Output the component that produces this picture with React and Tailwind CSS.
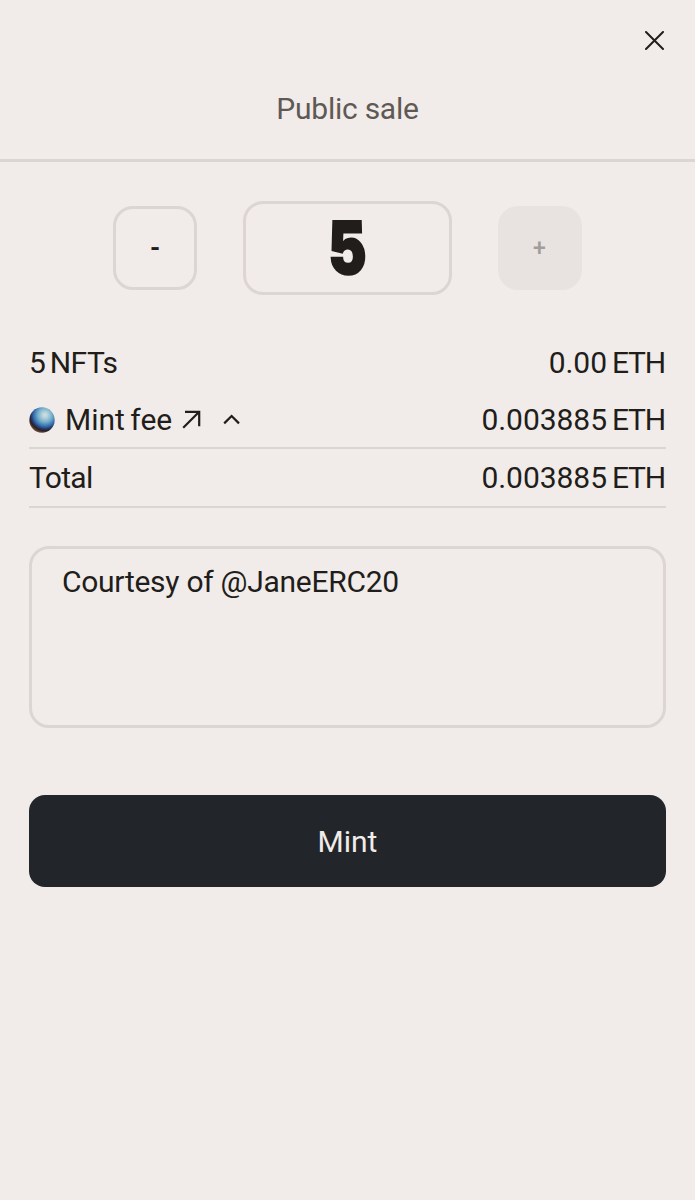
import React from "react";

function CloseIcon() {
  return (
    <svg width="20" height="20" viewBox="0 0 20 20" fill="none" stroke="#211d1a" strokeWidth="2" strokeLinecap="round">
      <path d="M1 1 18 18M18 1 1 18" />
    </svg>
  );
}

function Orb() {
  return (
    <svg width="26" height="26" viewBox="0 0 26 26">
      <defs>
        <radialGradient id="orb" gradientUnits="userSpaceOnUse" cx="16" cy="8" r="21">
          <stop offset="0" stopColor="#d3e1e4" />
          <stop offset="0.14" stopColor="#b3d1da" />
          <stop offset="0.34" stopColor="#74aecb" />
          <stop offset="0.54" stopColor="#356fae" />
          <stop offset="0.66" stopColor="#233a6c" />
          <stop offset="0.75" stopColor="#2b1f26" />
          <stop offset="0.85" stopColor="#664630" />
          <stop offset="0.95" stopColor="#2d1c18" />
        </radialGradient>
      </defs>
      <circle cx="13" cy="13" r="12.7" fill="url(#orb)" />
    </svg>
  );
}

function Row({ label, amount, className = "" }) {
  return (
    <div className={"flex items-center justify-between " + className}>
      <div className="flex items-center">{label}</div>
      <div className="flex gap-[5px] pr-px">
        <span className="tracking-[-0.05px]">{amount}</span>
        <span className="tracking-[-1.2px]">ETH</span>
      </div>
    </div>
  );
}

export default function App() {
  return (
    <main className="h-[1200px] w-[695px] bg-[#f1ece9] font-[Roboto,sans-serif] text-[30px] leading-[40px] text-[#211d1a]">
      <header className="h-[162px] border-b-3 border-[#ddd5d3]">
        <div className="flex h-[81px] items-center justify-end pr-[30px]">
          <button aria-label="Close"><CloseIcon /></button>
        </div>
        <h1 className="pt-[8px] text-center tracking-[-0.25px] text-[#5f5955]">Public sale</h1>
      </header>

      <section className="flex items-center justify-center pt-[39px]">
        <button className="flex h-[84px] w-[84px] items-center justify-center rounded-[20px] border-3 border-[#ddd5d3] text-[26px] font-bold">
          <span>-</span>
        </button>
        <div className="mx-[46px] flex h-[94px] w-[209px] items-center justify-center rounded-[20px] border-3 border-[#ddd5d3]">
          <span className="inline-block scale-x-[0.78] skew-x-2 font-[Inter,sans-serif] text-[73px] leading-[88px] font-black [-webkit-text-stroke:2px_#211d1a]">5</span>
        </div>
        <button disabled className="flex h-[84px] w-[84px] items-center justify-center rounded-[20px] bg-[#e8e3e0] pt-[2px] pr-px text-[23px] font-medium text-[#a29d9a]">
          <span>+</span>
        </button>
      </section>

      <section className="px-[29px] pt-[48px]">
        <Row className="h-[40px]" label={<span className="tracking-[-0.55px] [word-spacing:-2.5px]">5 NFTs</span>} amount="0.00" />
        <Row
          className="mt-[9px] h-[57px] border-b-2 border-[#dcd6d3]"
          label={
            <>
              <Orb />
              <span className="ml-[10px] [word-spacing:-2px]">Mint fee</span>
              <svg className="ml-[10px]" width="19" height="19" viewBox="0 0 19 19" fill="none" stroke="#211d1a" strokeWidth="2.2">
                <path d="M3 1.8h14.2v14.5M17.2 1.8 1.2 17.8" />
              </svg>
              <svg className="ml-[22px]" width="18" height="12" viewBox="0 0 18 12" fill="none" stroke="#211d1a" strokeWidth="2.2">
                <path d="m1.2 9.4 7.4-7.4 7.4 7.4" />
              </svg>
            </>
          }
          amount="0.003885"
        />
        <Row className="h-[59px] border-b-2 border-[#dcd6d3]" label={<span className="tracking-[-0.7px]">Total</span>} amount="0.003885" />

        <div className="mt-[38px] h-[182px] rounded-[20px] border-3 border-[#ddd5d3] px-[30px] pt-[13px]">
          <span className="tracking-[-0.28px]">Courtesy of @JaneERC20</span>
        </div>

        <button className="mt-[67px] flex h-[92px] w-full items-center justify-center rounded-[16px] bg-[#22262a] pt-[2px] text-[#f1ece9]">
          <span>Mint</span>
        </button>
      </section>
    </main>
  );
}
